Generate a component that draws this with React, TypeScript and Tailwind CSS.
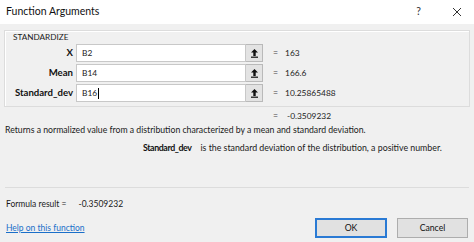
import React from "react";

const rows = [
  { label: "X", value: "B2", result: "163" },
  { label: "Mean", value: "B14", result: "166.6" },
  { label: "Standard_dev", value: "B16", result: "10.25865488", caret: true },
];

// Excel "collapse dialog" arrow glyph
function RefIcon() {
  return (
    <svg width="9" height="10" viewBox="0 0 9 10" aria-hidden="true">
      <path d="M4.5 1 L1 4.5 H3.3 V8 H5.7 V4.5 H8 Z" fill="#111" />
      <rect x="1" y="8.6" width="7" height="1.2" fill="#111" />
    </svg>
  );
}

export default function App() {
  return (
    <div className="flex h-[242px] w-[474px] flex-col overflow-hidden whitespace-nowrap bg-[#f0f0f0] font-['Lato','Noto_Sans',sans-serif] text-[8.7px] text-[#1a1a1a]">
      {/* Title bar */}
      <div className="flex h-[24px] shrink-0 items-center bg-white pl-[6px] pr-[12px]">
        <span className="text-[10.5px] text-[#111]">Function Arguments</span>
        <span className="ml-auto mr-[31px] text-[10.5px] text-[#333]">?</span>
        <svg width="10" height="10" viewBox="0 0 10 10" aria-hidden="true">
          <path d="M1 1 L9 9 M9 1 L1 9" stroke="#333" strokeWidth="1" />
        </svg>
      </div>

      {/* Group box */}
      <div className="mx-[4px] mt-[6px] h-[77px] shrink-0 border border-[#dcdcdc] shadow-[inset_1px_1px_0_#fff]">
        <div className="h-[13px] pl-[8px] pt-[1px] text-[8.2px] leading-[11px] text-[#1a1a1a]">STANDARDIZE</div>
        <div className="flex flex-col gap-[2px]">
          {rows.map((r) => (
            <div key={r.label} className="flex h-[18px] items-center">
              <div className="w-[68px] shrink-0 text-right text-[9.6px] font-bold text-[#111]">{r.label}</div>
              <div className="ml-[3px] flex h-[18px] w-[170px] items-center border border-[#c8c8c8] bg-white pl-[5px] text-[8.4px] text-[#222]">
                {r.value}
                {r.caret && <span className="ml-[0.5px] inline-block h-[11px] w-px bg-black" />}
              </div>
              <div className="flex h-[18px] w-[17px] items-center justify-center border border-l-0 border-[#b9b9b9] bg-[#e3e3e3]">
                <RefIcon />
              </div>
              <span className="ml-[10px] text-[#444]">=</span>
              <span className="ml-[7px] text-[8.4px] text-[#222]">{r.result}</span>
            </div>
          ))}
        </div>
      </div>

      {/* Result + description */}
      <div className="mt-[2px] flex h-[14px] shrink-0 items-center pl-[273px]">
        <span className="text-[#444]">=</span>
        <span className="ml-[9px] text-[8.4px] text-[#222]">-0.3509232</span>
      </div>
      <div className="h-[14px] shrink-0 pl-[5px] leading-[14px]">
        Returns a normalized value from a distribution characterized by a mean and standard deviation.
      </div>
      <div className="mt-[4px] flex h-[14px] shrink-0 items-center pl-[143px] leading-[14px]">
        <span className="text-[8.8px] font-bold tracking-[-0.4px] text-[#111]">Standard_dev</span>
        <span className="ml-[9px] text-[8.8px]">is the standard deviation of the distribution, a positive number.</span>
      </div>

      {/* Separator */}
      <div className="mx-[5px] mt-[32px] h-px shrink-0 bg-[#dcdcdc]" />

      {/* Footer */}
      <div className="mt-[9px] flex h-[14px] shrink-0 items-center pl-[6px] text-[8.5px]">
        <span>Formula result =</span>
        <span className="ml-[12px]">-0.3509232</span>
      </div>
      <div className="mt-[7px] flex h-[20px] shrink-0 items-center pl-[6px] pr-[6px]">
        <a href="#" className="text-[8.5px] text-[#1a6fc9] underline decoration-[#1a6fc9]">
          Help on this function
        </a>
        <button
          type="button"
          className="ml-auto h-[20px] w-[72px] border-2 border-[#2a7ad4] bg-[#e1e1e1] text-[8.7px] text-[#111]"
        >
          OK
        </button>
        <button
          type="button"
          className="ml-[10px] h-[20px] w-[71px] border border-[#adadad] bg-[#e1e1e1] text-[8.7px] text-[#111]"
        >
          Cancel
        </button>
      </div>
    </div>
  );
}
